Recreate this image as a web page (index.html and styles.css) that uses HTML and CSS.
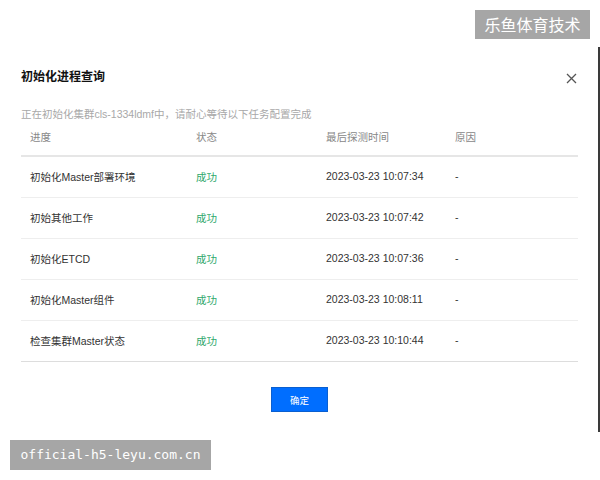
FILE: index.html
```html
<!DOCTYPE html>
<html lang="zh-CN">
<head>
    <meta charset="UTF-8">
    <meta name="viewport" content="width=device-width, initial-scale=1.0">
    <title>初始化进程查询</title>
    <link rel="stylesheet" href="styles.css">
</head>
<body>
    <div class="mark mark-top">乐鱼体育技术</div>

    <div class="modal">
        <div class="modal-head">
            <h2>初始化进程查询</h2>
            <svg class="close" width="11" height="11" viewBox="0 0 11 11">
                <path d="M1 1L10 10M10 1L1 10" stroke="#555" stroke-width="1.3" fill="none"/>
            </svg>
        </div>

        <p class="tip">正在初始化集群cls-1334ldmf中，请耐心等待以下任务配置完成</p>

        <div class="grid">
            <div class="row head">
                <span>进度</span>
                <span>状态</span>
                <span>最后探测时间</span>
                <span>原因</span>
            </div>
            <div class="row">
                <span>初始化Master部署环境</span>
                <span class="ok">成功</span>
                <span>2023-03-23 10:07:34</span>
                <span>-</span>
            </div>
            <div class="row">
                <span>初始其他工作</span>
                <span class="ok">成功</span>
                <span>2023-03-23 10:07:42</span>
                <span>-</span>
            </div>
            <div class="row">
                <span>初始化ETCD</span>
                <span class="ok">成功</span>
                <span>2023-03-23 10:07:36</span>
                <span>-</span>
            </div>
            <div class="row">
                <span>初始化Master组件</span>
                <span class="ok">成功</span>
                <span>2023-03-23 10:08:11</span>
                <span>-</span>
            </div>
            <div class="row last">
                <span>检查集群Master状态</span>
                <span class="ok">成功</span>
                <span>2023-03-23 10:10:44</span>
                <span>-</span>
            </div>
        </div>

        <div class="footer">
            <button class="btn">确定</button>
        </div>
    </div>

    <div class="mark mark-bottom">official-h5-leyu.com.cn</div>
</body>
</html>
```

FILE: styles.css
```css
body {
    margin: 0;
    background: #fff;
    font-family: "Liberation Sans", Arial, "Noto Sans CJK SC", sans-serif;
    color: #333;
}
.mark {
    position: absolute;
    background: #a6a6a6;
    color: #fff;
}
.mark-top {
    top: 10px;
    left: 475px;
    width: 115px;
    height: 29px;
    line-height: 29px;
    text-align: center;
    font-family: "Noto Sans CJK SC", sans-serif;
    font-size: 16px;
}
.mark-bottom {
    top: 440px;
    left: 10px;
    width: 201px;
    height: 30px;
    line-height: 30px;
    text-align: center;
    font-family: "DejaVu Sans Mono", monospace;
    font-size: 13px;
}
.modal {
    margin-top: 47px;
    height: 385px;
    box-sizing: border-box;
    border-right: 2px solid #3a3a3a;
    padding: 22px 20px 0 21px;
}
.modal-head {
    display: flex;
    justify-content: space-between;
    align-items: center;
    height: 16px;
}
.modal-head h2 {
    margin: 0;
    font-size: 12px;
    font-weight: bold;
    color: #111;
    line-height: 16px;
}
.close {
    margin-right: 1px;
    margin-top: 2px;
}
.tip {
    margin: 22px 0 0;
    font-size: 10.5px;
    line-height: 14px;
    color: #a8a8a8;
}
.row {
    display: grid;
    grid-template-columns: 166px 130px 129px 1fr;
    height: 40px;
    align-items: center;
    font-size: 10.5px;
    border-bottom: 1px solid #eeeeee;
}
.row span {
    padding-left: 9px;
    padding-bottom: 2px;
}
.row.head {
    height: 32px;
    padding-bottom: 2px;
    color: #888;
    border-bottom: 2px solid #e6e6e6;
}
.row.last {
    border-bottom-color: #dddddd;
}
.ok {
    color: #2ea86c;
}
.footer {
    display: flex;
    justify-content: center;
    margin-top: 25px;
}
.btn {
    width: 57px;
    height: 25px;
    border: 1px solid #0a5fd0;
    background: #006eff;
    color: #fff;
    font-family: "Noto Sans CJK SC", sans-serif;
    font-size: 9.5px;
    padding: 0;
}
```
